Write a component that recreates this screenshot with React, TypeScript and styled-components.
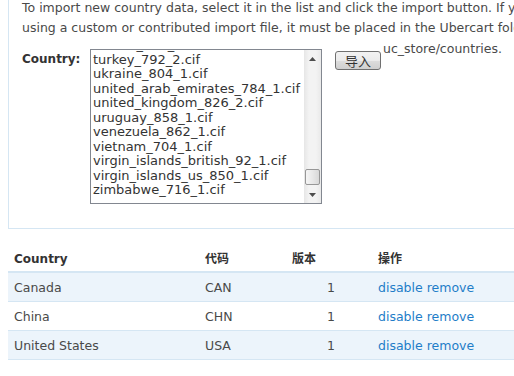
import styled, { createGlobalStyle } from 'styled-components';

const GlobalStyle = createGlobalStyle`
  html, body {
    margin: 0;
    padding: 0;
    background: #ffffff;
    overflow: hidden;
  }
  body {
    font-family: "DejaVu Sans", Verdana, sans-serif;
    font-size: 12.5px;
    color: #494949;
  }
`;

const Page = styled.div`
  width: 514px;
  height: 376px;
  overflow: hidden;
`;

const ImportBox = styled.div`
  margin-left: 8px;
  width: 560px;
  height: 231px;
  box-sizing: border-box;
  border-left: 1px solid #d5e6f3;
  border-bottom: 1px solid #d5e6f3;
  padding-left: 13px;
`;

const Intro = styled.div`
  margin-top: -2px;
  line-height: 20px;
  white-space: nowrap;
`;

const FormRow = styled.div`
  display: flex;
  align-items: flex-start;
`;

const Label = styled.label`
  width: 68px;
  margin-top: 11px;
  font-size: 12px;
  font-weight: bold;
  color: #333333;
  line-height: 20px;
`;

const ListBox = styled.div`
  margin-top: 11px;
  width: 230px;
  height: 153px;
  border: 1px solid #828790;
  display: flex;
  overflow: hidden;
  background: #ffffff;
`;

const Options = styled.div`
  flex: 1;
  overflow: hidden;
  padding-left: 2px;
`;

const OptionList = styled.div`
  margin-top: -12px;
`;

const Option = styled.div`
  height: 14.5px;
  font-size: 13px;
  line-height: 14.5px;
  white-space: nowrap;
  color: #333333;
`;

const Scrollbar = styled.div`
  width: 17px;
  display: flex;
  flex-direction: column;
  background: linear-gradient(to right, #e6e6e6, #f3f3f3 30%, #f3f3f3 70%, #e9e9e9);
`;

const Arrow = styled.div`
  height: 17px;
  display: flex;
  align-items: center;
  justify-content: center;
`;

const Track = styled.div`
  flex: 1;
  display: flex;
  flex-direction: column;
  justify-content: flex-end;
  padding-bottom: 1px;
`;

const Thumb = styled.div`
  height: 14px;
  margin: 0 1px;
  border: 1px solid #979797;
  border-radius: 2px;
  background: linear-gradient(to right, #f5f5f5, #e8e8e8 50%, #d8d8d8);
`;

const ImportButton = styled.button`
  margin: 13px 0 0 13px;
  width: 46px;
  height: 19px;
  padding: 0;
  border: 1px solid #707070;
  border-radius: 3px;
  background: linear-gradient(to bottom, #f2f2f2 0%, #ebebeb 50%, #dddddd 51%, #cfcfcf 100%);
  font-family: "Noto Sans CJK SC", sans-serif;
  font-size: 13px;
  line-height: 15px;
  color: #333333;
`;

const Tail = styled.span`
  margin-left: 2px;
  margin-top: 1px;
  line-height: 20px;
  white-space: nowrap;
`;

const Table = styled.table`
  margin: 11px 0 0 8px;
  width: 520px;
  border-collapse: collapse;
`;

const HeadCell = styled.th<{ $w?: number }>`
  width: ${(p) => (p.$w ? `${p.$w}px` : 'auto')};
  height: 29px;
  padding: 0 6px 2px;
  vertical-align: bottom;
  line-height: 20px;
  text-align: left;
  font-size: 12px;
  font-weight: bold;
  color: #333333;
  border-bottom: 2px solid #d5e6f3;
  font-family: "DejaVu Sans", "Noto Sans CJK SC", sans-serif;
`;

const Row = styled.tr<{ $odd: boolean }>`
  background: ${(p) => (p.$odd ? '#ecf4fb' : '#ffffff')};
  border-bottom: 1px solid #d5e6f3;
`;

const Cell = styled.td<{ $right?: boolean }>`
  height: 28px;
  padding: 0 ${(p) => (p.$right ? '37px' : '6px')} 0 6px;
  text-align: ${(p) => (p.$right ? 'right' : 'left')};
  vertical-align: middle;
`;

const ActionLink = styled.a`
  color: #1e7dc8;
  text-decoration: none;
`;

const files = [
  'tunisia_788_1.cif',
  'turkey_792_2.cif',
  'ukraine_804_1.cif',
  'united_arab_emirates_784_1.cif',
  'united_kingdom_826_2.cif',
  'uruguay_858_1.cif',
  'venezuela_862_1.cif',
  'vietnam_704_1.cif',
  'virgin_islands_british_92_1.cif',
  'virgin_islands_us_850_1.cif',
  'zimbabwe_716_1.cif',
];

const countries = [
  { name: 'Canada', code: 'CAN', version: 1 },
  { name: 'China', code: 'CHN', version: 1 },
  { name: 'United States', code: 'USA', version: 1 },
];

export default function App() {
  return (
    <Page>
      <GlobalStyle />
      <ImportBox>
        <Intro>
          To import new country data, select it in the list and click the import button. If you are
          <br />
          using a custom or contributed import file, it must be placed in the Ubercart folder
        </Intro>
        <FormRow>
          <Label>Country:</Label>
          <ListBox>
            <Options>
              <OptionList>
                {files.map((f) => (
                  <Option key={f}>{f}</Option>
                ))}
              </OptionList>
            </Options>
            <Scrollbar>
              <Arrow>
                <svg width="7" height="4" viewBox="0 0 7 4">
                  <path d="M0 4 L3.5 0 L7 4 Z" fill="#4d4d4d" />
                </svg>
              </Arrow>
              <Track>
                <Thumb />
              </Track>
              <Arrow>
                <svg width="7" height="4" viewBox="0 0 7 4">
                  <path d="M0 0 L3.5 4 L7 0 Z" fill="#4d4d4d" />
                </svg>
              </Arrow>
            </Scrollbar>
          </ListBox>
          <ImportButton>导入</ImportButton>
          <Tail>uc_store/countries.</Tail>
        </FormRow>
      </ImportBox>
      <Table>
        <thead>
          <tr>
            <HeadCell $w={179}>Country</HeadCell>
            <HeadCell $w={75}>代码</HeadCell>
            <HeadCell $w={74}>版本</HeadCell>
            <HeadCell>操作</HeadCell>
          </tr>
        </thead>
        <tbody>
          {countries.map((c, i) => (
            <Row key={c.code} $odd={i % 2 === 0}>
              <Cell>{c.name}</Cell>
              <Cell>{c.code}</Cell>
              <Cell $right>{c.version}</Cell>
              <Cell>
                <ActionLink href="#">disable</ActionLink> <ActionLink href="#">remove</ActionLink>
              </Cell>
            </Row>
          ))}
        </tbody>
      </Table>
    </Page>
  );
}
